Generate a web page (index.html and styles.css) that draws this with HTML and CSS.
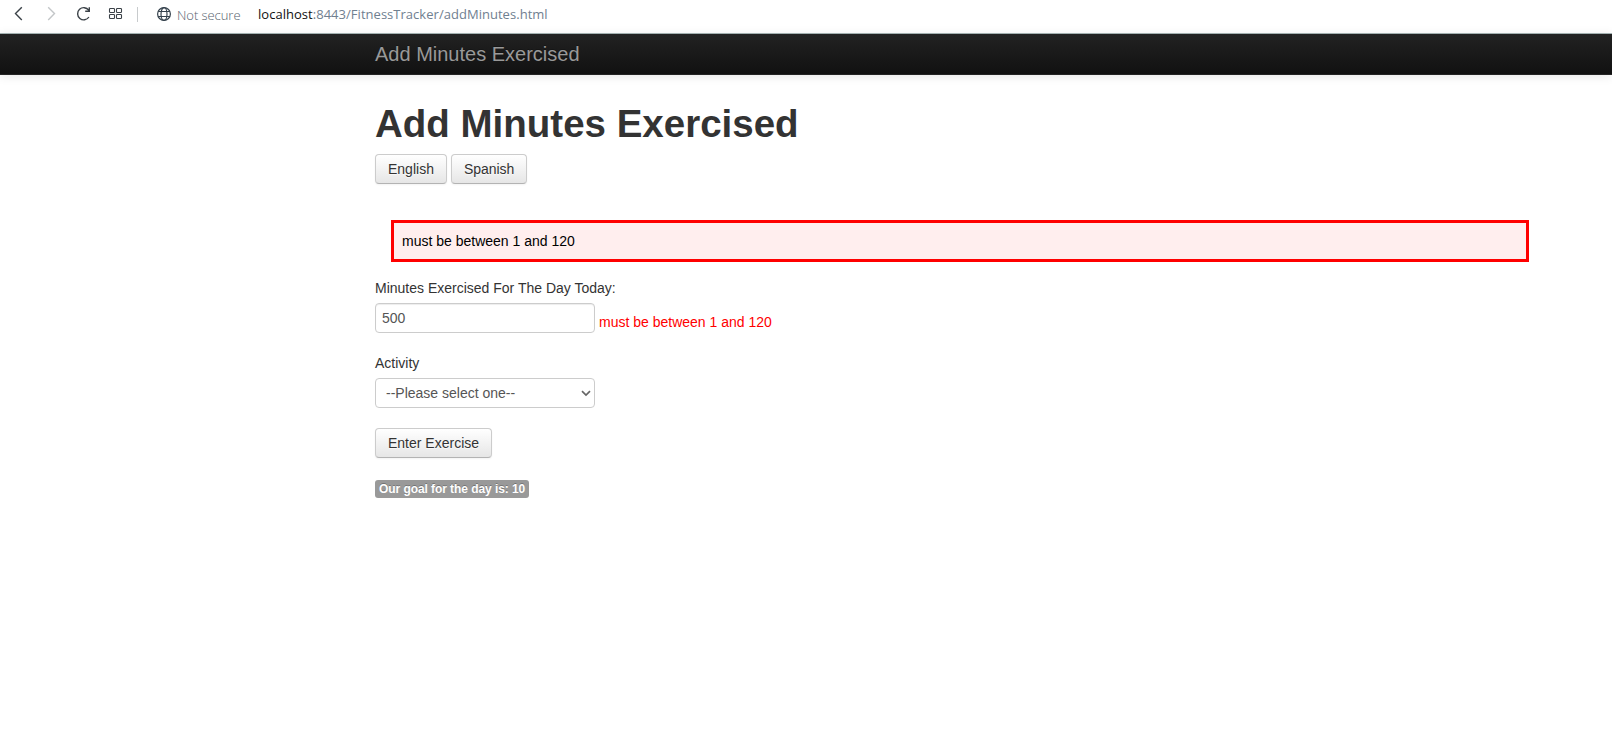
FILE: index.html
```html
<!DOCTYPE html>
<html lang="en">
<head>
<meta charset="utf-8">
<title>Add Minutes Exercised</title>
<link rel="stylesheet" href="styles.css">
</head>
<body>
<header class="toolbar">
  <svg class="icons" width="156" height="33" viewBox="0 0 156 33" fill="none" stroke="#3b4248" stroke-width="1.4">
    <path d="M21.800 7.200L15.500 13.600L21.800 20"/>
    <path d="M48.200 7.200L54.500 13.600L48.200 20" stroke="#c3c6c8"/>
    <path d="M88.700 10.200A6.100 6.100 0 1 0 88.900 17M89.300 7.200V11.300H85.200"/>
    <g stroke-width="1.100"><rect x="109.500" y="8.500" width="5" height="4" rx=".8"/><rect x="116.500" y="8.500" width="5" height="4" rx=".8"/><rect x="109.500" y="14.500" width="5" height="4" rx=".8"/><rect x="116.500" y="14.500" width="5" height="4" rx=".8"/></g>
    <path stroke="#c8cbcd" stroke-width="1" d="M137.500 7V22"/>
  </svg>
  <svg class="globe" width="16" height="16" viewBox="0 0 16 16" fill="none" stroke="#35424d" stroke-width="1.200">
    <circle cx="8" cy="8" r="6.400"/><ellipse cx="8" cy="8" rx="3" ry="6.400"/><path d="M2.200 5.500H13.800M2.200 10.500H13.800"/>
  </svg>
  <span class="security">Not secure</span>
  <span class="address"><b>localhost</b>:8443/FitnessTracker/addMinutes.html</span>
</header>
<nav class="navbar"><a class="brand">Add Minutes Exercised</a></nav>
<main class="container">
  <h1>Add Minutes Exercised</h1>
  <div class="languages"><a class="btn">English</a><a class="btn spanish">Spanish</a></div>
  <form>
    <div class="errorblock">must be between 1 and 120</div>
    <label for="minutes">Minutes Exercised For The Day Today:</label>
    <div class="row"><input id="minutes" type="text" value="500"><span class="error">must be between 1 and 120</span></div>
    <label for="activity">Activity</label>
    <div class="row select"><select id="activity"><option>--Please select one--</option></select>
      <svg class="chevron" width="10" height="7" viewBox="0 0 10 7" fill="none" stroke="#666" stroke-width="1.700"><path d="M1 1.200L5 5L9 1.200"/></svg>
    </div>
    <button class="btn submit" type="button">Enter Exercise</button>
  </form>
  <span class="goal">Our goal for the day is: 10</span>
</main>
</body>
</html>
```
FILE: styles.css
```css
* { box-sizing: border-box; }
body {
  margin: 0;
  background: #fff;
  color: #333;
  font: 14px/20px "Liberation Sans", Arial, sans-serif;
}
.toolbar {
  display: flex;
  align-items: flex-start;
  height: 34px;
  border-bottom: 1px solid #a9b8b8;
  font-family: "Open Sans", "Noto Sans", sans-serif;
  white-space: nowrap;
}
.icons { flex: none; }
.globe { flex: none; margin-top: 6px; }
.security {
  width: 81px;
  margin: 5px 0 0 5px;
  color: #56626d;
  font-size: 13px;
  font-weight: 300;
  letter-spacing: -.05px;
}
.address { margin-top: 4px; color: #708090; font-size: 13px; letter-spacing: .03px; }
.address b { color: #111; font-weight: 400; }
.navbar {
  display: flex;
  height: 41px;
  padding-left: 375px;
  background: linear-gradient(#222, #111);
  border-bottom: 1px solid #252525;
  box-shadow: 0 1px 10px rgba(0, 0, 0, .1);
}
.brand {
  padding-top: 10px;
  color: #999;
  font-size: 20px;
  text-shadow: 0 -1px 0 rgba(0, 0, 0, .25);
}
.container { width: 1170px; margin-left: 375px; padding-top: 29px; }
h1 { margin: 0 0 10px; font-size: 38.5px; line-height: 40px; }
.languages { display: flex; gap: 4px; }
.btn {
  display: block;
  height: 30px;
  padding: 4px 12px;
  border: 1px solid #ccc;
  border-color: #ccc #ccc #b3b3b3;
  border-radius: 4px;
  background: linear-gradient(#fff, #e6e6e6);
  box-shadow: inset 0 1px 0 rgba(255, 255, 255, .2), 0 1px 2px rgba(0, 0, 0, .05);
  color: #333;
  font: inherit;
  text-shadow: 0 1px 1px rgba(255, 255, 255, .75);
}
.spanish { width: 76px; letter-spacing: -.05px; }
form { margin: 36px 0 20px; }
.errorblock {
  margin: 0 16px 16px;
  padding: 8px;
  border: 3px solid #f00;
  background: #ffeeee;
  color: #000;
}
label { display: block; margin-bottom: 5px; }
.row { display: flex; height: 30px; margin-bottom: 20px; }
input, select {
  width: 220px;
  height: 30px;
  margin: 0;
  padding: 4px 6px;
  border: 1px solid #ccc;
  border-radius: 4px;
  background: #fff;
  color: #555;
  font: inherit;
}
input { box-shadow: inset 0 1px 1px rgba(0, 0, 0, .075); }
select { appearance: none; padding-left: 10px; }
.select { position: relative; width: 220px; }
.chevron { position: absolute; right: 4px; top: 12px; pointer-events: none; }
.error { padding: 9px 0 0 4px; color: #f00; }
.goal {
  display: inline-block;
  height: 18px;
  width: 154px;
  margin-top: 2px;
  padding: 2px 4px;
  border-radius: 3px;
  background: #999;
  color: #fff;
  font-size: 12px;
  font-weight: 700;
  letter-spacing: -.07px;
  line-height: 14px;
  white-space: nowrap;
  text-shadow: 0 -1px 0 rgba(0, 0, 0, .25);
}
```
